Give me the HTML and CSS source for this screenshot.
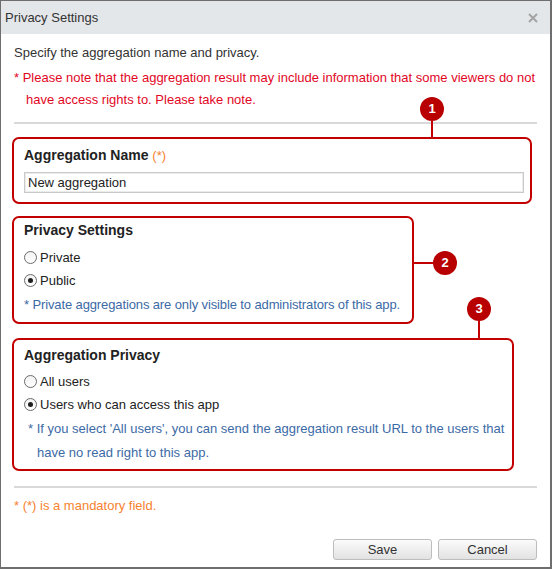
FILE: index.html
```html
<!DOCTYPE html>
<html>
<head>
  <title>Privacy Settings</title>
  <link rel="stylesheet" href="styles.css">
</head>
<body>
  <div class="dialog">
    <div class="titlebar">
      <span class="title">Privacy Settings</span>
      <svg class="close" width="10" height="10" viewBox="0 0 10 10">
        <path d="M1 1L9 9M9 1L1 9" stroke="#a3a3a3" stroke-width="2"/>
      </svg>
    </div>

    <div class="content">
      <p class="intro">Specify the aggregation name and privacy.</p>
      <p class="warning">* Please note that the aggregation result may include information that some viewers do not have access rights to. Please take note.</p>
      <div class="divider"></div>

      <div class="box box-name">
        <div class="label">Aggregation Name <span class="req">(*)</span></div>
        <input class="text-input" type="text" value="New aggregation">
      </div>

      <div class="box box-privacy">
        <div class="label">Privacy Settings</div>
        <div class="radio-row"><span class="radio"></span>Private</div>
        <div class="radio-row"><span class="radio checked"></span>Public</div>
        <p class="note note-single">* Private aggregations are only visible to administrators of this app.</p>
      </div>

      <div class="box box-access">
        <div class="label">Aggregation Privacy</div>
        <div class="radio-row first"><span class="radio"></span>All users</div>
        <div class="radio-row"><span class="radio checked"></span>Users who can access this app</div>
        <p class="note note-wide">* If you select 'All users', you can send the aggregation result URL to the users that have no read right to this app.</p>
      </div>

      <div class="divider divider-bottom"></div>
      <p class="mandatory">* (*) is a mandatory field.</p>

      <div class="buttons">
        <button type="button" class="btn">Save</button>
        <button type="button" class="btn">Cancel</button>
      </div>
    </div>

    <!-- numbered callouts -->
    <div class="callout-line line-1"></div>
    <div class="badge badge-1">1</div>
    <div class="callout-line line-2"></div>
    <div class="badge badge-2">2</div>
    <div class="callout-line line-3"></div>
    <div class="badge badge-3">3</div>
  </div>
</body>
</html>
```

FILE: styles.css
```css
body {
  margin: 0;
  background-color: #fff;
  font-family: 'Liberation Sans', Arial, sans-serif;
  font-size: 13px;
  color: #333;
}

.dialog {
  position: relative;
  width: 552px;
  height: 569px;
  box-sizing: border-box;
  border: 1px solid #6e6e6e;
  border-right-width: 2px;
  border-bottom-width: 2px;
  background-color: #fff;
}

.titlebar {
  display: flex;
  align-items: center;
  justify-content: space-between;
  height: 33px;
  padding: 0 12px 0 4px;
  background-color: #e4e7ea;
}

.title {
  font-size: 13px;
  color: #333;
}

.content {
  padding: 8px 13px 0 13px;
}

p {
  margin: 0;
}

.intro {
  line-height: 22px;
}

.warning {
  margin-top: 3px;
  line-height: 22px;
  padding-left: 12px;
  text-indent: -12px;
  color: #e2071f;
}

.divider {
  margin-top: 11px;
  height: 2px;
  background-color: #d9d9d9;
}

/* red outlined sections */
.box {
  margin-left: -2px;
  border: 2px solid #c20000;
  border-radius: 7px;
  box-sizing: border-box;
}

.box-name {
  margin-top: 13px;
  width: 520px;
  padding: 6px 6px 9px 10px;
}

.box-privacy {
  margin-top: 12px;
  width: 402px;
  padding: 2px 6px 6px 10px;
}

.box-access {
  margin-top: 14px;
  width: 502px;
  padding: 5px 6px 4px 10px;
}

.label {
  font-weight: bold;
  font-size: 14px;
  line-height: 20px;
  color: #222;
}

.req {
  font-weight: normal;
  font-size: 13px;
  color: #f7822f;
}

.text-input {
  display: block;
  margin-top: 6px;
  width: 100%;
  height: 21px;
  box-sizing: border-box;
  padding: 0 3px;
  border: 1px solid #c9c9c9;
  box-shadow: inset 0 0 0 1px #ececec;
  font-family: inherit;
  font-size: 13px;
  color: #222;
}

.box-privacy .label {
  margin-bottom: 6px;
}

.box-access .label {
  margin-bottom: 5px;
}

.radio-row {
  display: flex;
  align-items: center;
  height: 23px;
  color: #222;
}

.radio {
  width: 11px;
  height: 11px;
  margin-right: 3px;
  border: 1px solid #6a6a6a;
  border-radius: 50%;
  background: linear-gradient(#f2f2f2, #fff);
  position: relative;
}

.radio.checked::after {
  content: '';
  position: absolute;
  left: 3px;
  top: 3px;
  width: 5px;
  height: 5px;
  border-radius: 50%;
  background-color: #1e1e1e;
}

.note {
  margin-top: 2px;
  line-height: 22px;
  color: #3c6aa6;
}

.note-single {
  white-space: nowrap;
  letter-spacing: -0.12px;
}

.note-wide {
  margin-top: 1px;
  line-height: 24px;
  padding-left: 13px;
  text-indent: -9px;
}

.divider-bottom {
  margin-top: 15px;
}

.mandatory {
  margin-top: 7px;
  line-height: 22px;
  color: #f7822f;
}

.buttons {
  display: flex;
  justify-content: flex-end;
  gap: 6px;
  margin-top: 22px;
}

.btn {
  width: 99px;
  height: 21px;
  padding: 0;
  border: 1px solid #bdbdbd;
  border-radius: 3px;
  background: linear-gradient(#fbfbfb, #e2e2e2);
  font-family: inherit;
  font-size: 13px;
  color: #333;
}

/* callouts */
.badge {
  position: absolute;
  width: 24px;
  height: 24px;
  border-radius: 50%;
  background-color: #b80000;
  color: #fff;
  font-weight: bold;
  font-size: 13px;
  line-height: 24px;
  text-align: center;
}

.callout-line {
  position: absolute;
  background-color: #c20000;
}

.badge-1 { left: 419px; top: 96px; }
.line-1 { left: 430px; top: 118px; width: 2px; height: 20px; }

.badge-2 { left: 432px; top: 250px; }
.line-2 { left: 412px; top: 261px; width: 22px; height: 2px; }

.badge-3 { left: 466px; top: 296px; }
.line-3 { left: 477px; top: 318px; width: 2px; height: 20px; }
```
